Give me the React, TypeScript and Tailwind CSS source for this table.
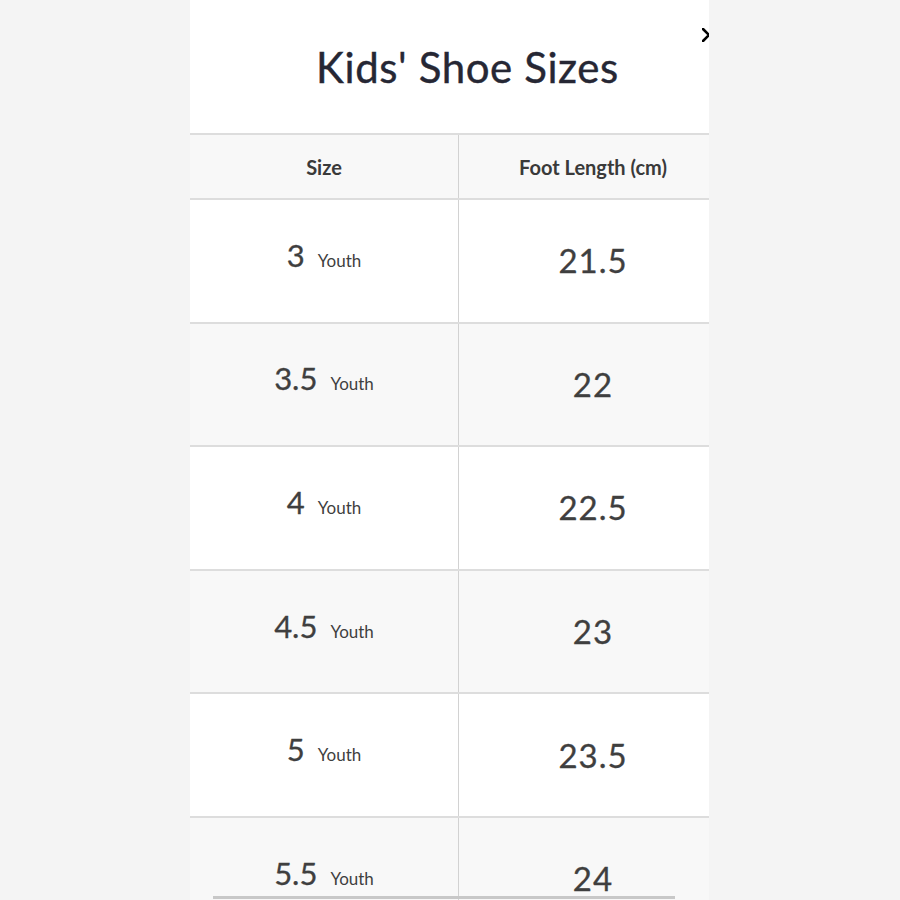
import React from "react";

const rows = [
  { s: "3", cm: "21.5" },
  { s: "3.5", cm: "22" },
  { s: "4", cm: "22.5" },
  { s: "4.5", cm: "23" },
  { s: "5", cm: "23.5" },
  { s: "5.5", cm: "24" },
];

export default function App() {
  return (
    <div
      className="w-full h-[900px] bg-[#f4f4f4] overflow-hidden flex justify-start pl-[190px]"
      style={{ fontFamily: "Lato, 'Open Sans', sans-serif" }}
    >
      <div className="relative w-[519px] h-[900px] bg-white overflow-hidden">
        <div className="w-[537px]">
          <div className="h-[133px] flex items-center justify-center pl-[18px]">
            <h1 className="text-[42px] leading-[42px] text-[#262734] font-normal tracking-[0.6px] [-webkit-text-stroke:0.4px_#262734]">
              Kids' Shoe Sizes
            </h1>
          </div>
          <div className="flex h-[67px] bg-[#f8f8f8] border-t-2 border-b-2 border-[#dddddd]">
            <div className="w-[269px] border-r border-[#d2d2d2] flex items-center justify-center text-[20px] font-bold text-[#3a3a3a]">
              Size
            </div>
            <div className="flex-1 flex items-center justify-center text-[20px] font-bold text-[#3a3a3a]">
              Foot Length (cm)
            </div>
          </div>
          {rows.map((r, i) => (
            <div
              key={r.s}
              className={
                "flex h-[123.6px] border-b-2 border-[#dddddd] " +
                (i % 2 === 1 ? "bg-[#f8f8f8]" : "bg-white")
              }
            >
              <div className="w-[269px] border-r border-[#d2d2d2] flex items-center justify-center pb-[11px]">
                <div className="flex items-baseline text-[#3f3f3f]">
                  <span className="text-[31px] leading-none [-webkit-text-stroke:0.3px_#3f3f3f]">{r.s}</span>
                  <span className="text-[17px] leading-none ml-[13px]">Youth</span>
                </div>
              </div>
              <div className="flex-1 flex items-center justify-center">
                <span className="text-[33px] leading-none text-[#3f3f3f] tracking-[1px] [-webkit-text-stroke:0.3px_#3f3f3f]">{r.cm}</span>
              </div>
            </div>
          ))}
        </div>
        <svg
          className="absolute left-[512px] top-[28px]"
          width="14"
          height="14"
          viewBox="0 0 14 14"
        >
          <path d="M1 1L13 13M13 1L1 13" stroke="#000" strokeWidth="2.6" strokeLinecap="round" />
        </svg>
        <div className="absolute left-[23px] top-[896px] w-[462px] h-[3px] bg-[#c8c8c8]" />
      </div>
    </div>
  );
}
